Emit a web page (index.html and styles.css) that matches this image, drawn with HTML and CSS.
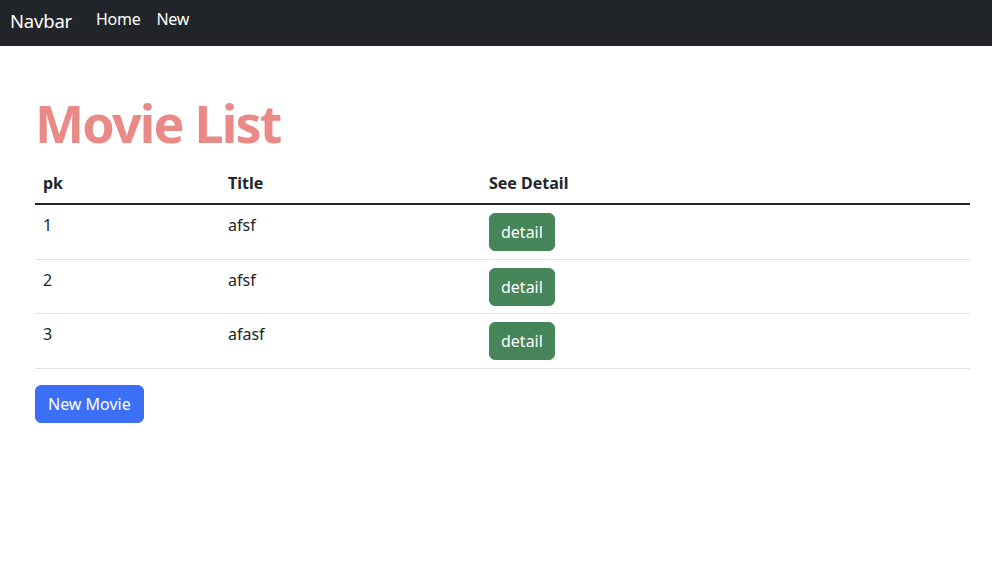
FILE: index.html
```html
<!DOCTYPE html>
<html lang="ko">
<head>
<meta charset="utf-8">
<title>Movie List</title>
<link rel="stylesheet" href="styles.css">
</head>
<body>
<nav class="navbar">
  <a class="brand" href="#">Navbar</a>
  <ul class="nav">
    <li><a class="nav-link" href="#">Home</a></li>
    <li><a class="nav-link" href="#">New</a></li>
  </ul>
</nav>
<main class="container">
  <h1 class="title">Movie List</h1>
  <table class="table">
    <thead>
      <tr><th class="c1">pk</th><th class="c2">Title</th><th>See Detail</th></tr>
    </thead>
    <tbody>
      <tr><td>1</td><td>afsf</td><td><a class="btn btn-green" href="#">detail</a></td></tr>
      <tr><td>2</td><td>afsf</td><td><a class="btn btn-green" href="#">detail</a></td></tr>
      <tr><td>3</td><td>afasf</td><td><a class="btn btn-green" href="#">detail</a></td></tr>
    </tbody>
  </table>
  <a class="btn btn-blue" href="#">New Movie</a>
</main>
</body>
</html>
```
FILE: styles.css
```css
* { box-sizing: border-box; }
html, body { margin: 0; padding: 0; }
body {
  font-family: "Noto Sans", "Noto Sans CJK KR", sans-serif;
  font-size: 16px;
  line-height: 1.5;
  color: #212529;
  background: #fff;
}
a { text-decoration: none; }
.navbar {
  display: flex;
  align-items: center;
  height: 46px;
  background: #212529;
  padding: 0 10px;
}
.brand {
  color: #fff;
  font-size: 18.5px;
  line-height: 30px;
  margin-right: 16px;
  margin-top: -4px;
  letter-spacing: -0.2px;
}
.nav {
  display: flex;
  list-style: none;
  margin: 0;
  padding: 0;
}
.nav-link {
  display: block;
  color: #fff;
  padding: 0 8px;
  line-height: 24px;
  margin-top: -8px;
  letter-spacing: -0.3px;
}
.container {
  padding: 45px 22px 0 35px;
}
.title {
  margin: 0 0 8px;
  font-size: 52px;
  line-height: 64px;
  font-weight: 700;
  letter-spacing: -1.8px;
  color: #ea8a86;
}
.table {
  width: 100%;
  border-collapse: collapse;
  margin-bottom: 16px;
}
.table th, .table td {
  text-align: left;
  vertical-align: top;
  padding: 8px;
  border-bottom: 1px solid #dee2e6;
}
.table tbody td { padding-bottom: 7.5px; }
.table thead th {
  font-weight: 700;
  border-bottom: 2px solid #212529;
}
.c1 { width: 185px; }
.c2 { width: 261px; }
.btn {
  display: inline-block;
  padding: 6px 11px;
  border: 1px solid transparent;
  border-radius: 6px;
  color: #fff;
  font-size: 16px;
  line-height: 24px;
}
.btn-green { background: #468558; border-color: #468558; }
.btn-blue { background: #3b6ff5; border-color: #3b6ff5; padding: 6px 12px; }
```
